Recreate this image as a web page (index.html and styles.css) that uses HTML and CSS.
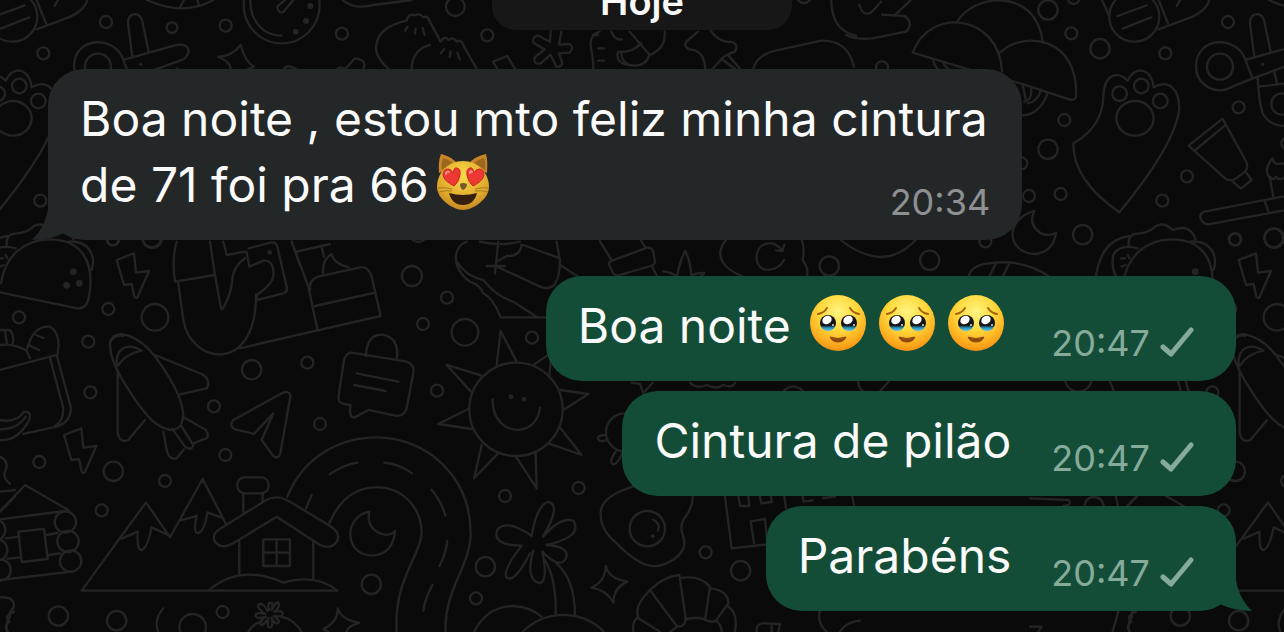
FILE: index.html
```html
<!DOCTYPE html>
<html lang="pt-BR">
<head>
    <meta charset="UTF-8">
    <meta name="viewport" content="width=device-width, initial-scale=1.0">
    <title>Conversa</title>
    <link rel="stylesheet" href="styles.css">
</head>
<body>
    <!-- papel de parede -->
    <svg class="wallpaper" aria-hidden="true">
        <defs>
            <g id="tile">
                <!-- pílula, guarda-sóis, tesoura, pata -->
                <g transform="translate(856 0) scale(.3333)">
                    <circle cx="576" cy="30" r="29"/><circle cx="732" cy="146" r="29"/><circle cx="576" cy="448" r="29"/><circle cx="680" cy="704" r="29"/><circle cx="221" cy="781" r="29"/><circle cx="1255" cy="714" r="29"/>
                    <circle cx="653" cy="-6" r="18"/><circle cx="646" cy="100" r="18"/><circle cx="928" cy="160" r="18"/><circle cx="1116" cy="66" r="18"/><circle cx="625" cy="360" r="18"/><circle cx="1148" cy="322" r="18"/><circle cx="993" cy="529" r="18"/><circle cx="919" cy="602" r="18"/><circle cx="614" cy="582" r="18"/><circle cx="519" cy="588" r="18"/><circle cx="496" cy="490" r="18"/><circle cx="1136" cy="718" r="18"/><circle cx="388" cy="724" r="18"/><circle cx="78" cy="202" r="18"/><circle cx="1294" cy="430" r="18"/>
                    <path d="M78 44L146 48Q175 70 150 95L50 115Q0 120-30 105M10 15Q20 50 45 38L75 5M118 44L165 0"/>
                    <path d="M302 68C350-20 540-40 560 125M170 158C220 20 430 40 438 215M170 158L360 215M432 158C500 90 670 110 660 290Q658 303 640 298L470 243M232 180Q235 200 250 212M262 190Q270 205 285 210M575 280Q550 345 500 346M525 262Q530 300 505 305M555 270Q545 305 515 310M500 255L510 300"/>
                    <circle cx="835" cy="50" r="75"/>
                    <path d="M785 48L872 16M800 86L886 52M738 0L760 48M908 0L936 70M908 88L1010 50Q1060 25 1062-10M962 18L975-5"/>
                    <path d="M1170 185C1150 105 1020 105 1020 200C1020 250 1070 280 1110 268L1190 235Z"/><circle cx="1092" cy="200" r="39"/>
                    <path d="M1195 170L1182 70Q1182 42 1205 42Q1222 44 1226 68L1244 155M1168 180L1328 135Q1363 130 1364 155Q1360 175 1338 182L1190 235"/><circle class="dot" cx="1220" cy="193" r="5"/>
                    <path d="M1205 232Q1208 300 1220 340Q1240 378 1290 378Q1350 370 1345 300L1330 205M1208 260L1335 245M1255 212L1263 252"/><circle cx="1278" cy="312" r="32"/>
                    <path d="M1100 356L998 437L1108 536Q1125 548 1145 532L1168 514Q1180 500 1168 480ZM1018 450L1110 374M1130 545L1155 566L1187 540L1168 514"/>
                    <path d="M790 637Q650 540 652 430Q740 380 742 290C745 215 790 215 815 242C840 190 890 210 893 262C940 235 970 270 970 325Q960 430 790 637Z"/>
                    <circle cx="791" cy="281" r="22"/><circle cx="856" cy="258" r="22"/><circle cx="913" cy="303" r="22"/><ellipse cx="837" cy="355" rx="56" ry="52"/>
                    <path d="M1290 588L1045 635Q1028 642 1035 658Q1045 676 1065 672L1290 630M1225 600L1237 633M1252 590L1242 535Q1220 510 1250 475Q1252 500 1290 488M1242 530Q1252 545 1260 530Q1272 545 1290 528"/>
                    <path d="M535 633C440 660 455 762 540 762Q592 755 600 698Q580 710 555 700Q515 675 535 633Z"/>
                    <path d="M818 735Q815 700 850 700Q880 698 900 678Q925 665 950 690Q1005 670 1018 718M720 830Q735 720 820 708M845 745Q790 730 772 765Q765 800 780 830M795 775h12M815 765l5 10M797 800l12-5"/>
                    <path d="M338 830Q345 795 400 790Q500 775 580 830M400 830L420 790M440 830L460 790"/>
                </g>
                <!-- cronômetro, estrela -->
                <g transform="scale(.3333)">
                    <circle cx="677" cy="77" r="18"/><circle cx="1026" cy="101" r="18"/><circle cx="516" cy="83" r="16"/>
                    <circle cx="845" cy="16" r="114"/><path d="M752-10C745 60 790 107 845 107M860-5L832 20Q835 42 850 36L880 0"/>
                    <circle class="dot" cx="931" cy="18" r="9"/><circle class="dot" cx="918" cy="63" r="9"/><circle class="dot" cx="887" cy="95" r="9"/>
                    <path d="M722 135Q695 170 655 170Q700 190 690 215M722 135Q735 185 762 200L735 212M440 0Q550 50 640 0M552 0L540 22M592 0L598 18M1028 0Q1060 30 1120 15L1235 0"/>
                    <path d="M1170 210Q1120 170 1130 130Q1140 80 1220 62Q1225 38 1245 46Q1260 38 1270 52Q1285 45 1290 65M1215 92L1223 80M1245 100L1247 86M1274 105L1268 84M1235 210Q1235 150 1290 135M850 210Q860 190 890 208M1010 210Q1018 195 1035 208L1065 175Q1105 180 1088 210"/>
                </g>
                <g transform="translate(428 0) scale(.3333)">
                    <circle cx="82" cy="20" r="28"/><circle cx="178" cy="106" r="18"/><circle cx="1128" cy="-15" r="24"/>
                    <path d="M0 55L38 125M38 125Q50 105 62 120Q75 108 85 125Q100 115 108 140L148 210M38 160L48 148M65 170L68 154M95 178L88 158"/>
                    <path d="M368 92L366 125L328 105Q305 120 322 132L350 148L320 172Q315 195 338 190L368 164L385 200Q405 202 402 185L392 160L425 158Q440 142 425 132L393 134L400 95"/>
                    <path d="M210 210L195 185L238 168L262 208M515 95Q480 105 490 150Q498 190 495 210M550 95Q560 122 582 118M510 105H495M510 145h18M510 182h18M605 95L665 165M605 195Q560 190 570 155Q610 160 640 130M580 160Q580 185 605 195M710 95Q715 145 665 165Q650 205 605 195"/>
                    <path d="M810 95L775 125Q765 140 785 148Q830 150 832 210M848 92Q875 130 910 125Q935 135 920 155Q890 165 880 178L850 210M885 180L925 210M900 165L935 205M975 210Q985 160 1060 148L1180 122Q1260 120 1278 200M1210 0Q1210 90 1284 108"/>
                </g>
                <!-- tomada, folha, maçã -->
                <g transform="translate(600 232) scale(.3333)">
                    <circle cx="688" cy="102" r="29"/>
                    <path d="M0 28L35 85M122 24L137 48M38 85L142 47Q157 46 160 60L165 88Q164 98 152 102L55 130Q42 130 38 120L27 98Q26 88 38 85ZM157 105L172 135"/>
                    <path d="M190 118Q215 120 232 135M232 130Q240 85 256 56Q272 90 274 130M274 130Q290 122 312 123L302 135"/>
                    <path d="M378 24C340 70 370 110 425 132M605 24Q615 45 608 85Q628 110 620 135M552 84C535 120 470 130 470 75C470 30 525 20 545 55M552 38L548 57L528 55M720 22Q780 72 843 75Q905 72 950 20M775 450Q775 470 790 478M840 478L865 450"/>
                </g>
                <!-- taco, raio, foguete, cesta -->
                <g transform="translate(0 230) scale(.3333)">
                    <circle cx="57" cy="262" r="18"/><circle cx="325" cy="237" r="18"/><circle cx="465" cy="262" r="40"/><circle cx="265" cy="335" r="18"/><circle cx="271" cy="487" r="18"/><circle cx="642" cy="529" r="18"/><circle cx="755" cy="419" r="29"/><circle cx="340" cy="28" r="18"/><circle cx="455" cy="24" r="28"/>
                    <path d="M0 187L232 235Q262 238 268 195C285 90 240 28 150 28C70 28 15 80 3 160M205 35C260 30 290 70 275 120"/>
                    <circle class="dot" cx="220" cy="125" r="10"/><circle class="dot" cx="200" cy="166" r="10"/><circle class="dot" cx="238" cy="160" r="10"/>
                    <path id="bolt" d="M350 90L402 70L408 128L447 123L412 203Q404 207 402 195L395 162L372 165Z"/>
                    <use href="#bolt" x="-158" y="525"/>
                    <path d="M520 600C470 600 430 550 380 470Q328 390 330 340Q335 310 370 313Q430 325 480 400Q550 500 550 560Q545 595 520 600ZM350 410C345 345 390 340 425 362Q380 370 355 405ZM335 330Q350 312 370 318M465 375L605 432Q635 450 620 475L540 493M353 425V610Q360 640 385 630L435 570M548 560L618 600Q632 625 610 628L580 640M518 598L555 650Q575 665 580 645L542 585M490 605L500 660Q508 692 530 685L552 658"/>
                    <path d="M0 420L170 375L212 530Q215 575 170 590L70 612M150 385L190 535Q190 575 165 588M0 345Q40 340 80 362L90 385M82 355Q100 285 150 290Q185 310 172 375M108 315L130 324M88 346L118 360M0 300H30Q45 320 38 340M15 300L20 340M0 570Q50 580 72 545Q100 545 85 575Q50 635 0 630M0 598Q50 600 78 560"/>
                    <path d="M530 35Q515 90 525 155L645 135L630 35M535 160L550 270C570 400 768 440 768 195M645 135L662 230Q666 245 672 230Q695 190 698 140Q705 105 735 85M670 35L680 75L735 65M740 65L748 110L790 92Q825 90 820 140Q815 165 770 195L772 210L850 190Q865 185 860 170L832 50Q828 35 812 38L745 55M720 355L900 313M875 35L900 105"/><circle class="dot" cx="809" cy="67" r="7"/>
                    <path d="M872 495Q865 480 845 490L700 570Q685 588 705 598L762 612L820 550L785 630L820 678Q838 690 842 665Z"/>
                </g>
                <!-- frasco, balão de fala, sol -->
                <g transform="translate(280 230) scale(.3333)">
                    <circle cx="396" cy="138" r="30"/><circle cx="501" cy="203" r="18"/><circle cx="429" cy="282" r="18"/><circle cx="555" cy="307" r="40"/><circle cx="756" cy="323" r="18"/><circle cx="471" cy="482" r="18"/><circle cx="82" cy="398" r="18"/><circle cx="120" cy="582" r="18"/><circle cx="415" cy="8" r="28"/>
                    <path d="M35 35L85 170L112 298M60 313L302 258L275 140Q265 108 240 112L115 140Q85 150 90 180M105 228L285 188M130 130Q125 90 155 72Q160 100 205 112M50 65L150 42M125 52L132 80"/>
                    <path d="M810 262H662Q640 205 610 190Q600 165 570 155C510 110 520 50 560 35M530 95Q560 140 610 150Q650 200 700 215L770 260M655 35L645 130M620 108h55M730 45L840 85C840 160 820 185 780 170L655 112M725 45Q720 80 680 78L650 95M830 35L838 80M600 35Q660 50 720 35M840 105L895 140"/>
                    <path d="M258 378Q260 312 308 314Q360 325 350 388M215 368L380 395Q405 405 400 430L380 535Q370 562 345 557L265 540L222 563Q205 562 212 525L190 522Q170 515 177 490L192 390Q200 366 215 368ZM230 430L355 455M222 465L317 483"/>
                    <circle cx="708" cy="538" r="140"/><path d="M638 508C635 620 770 630 780 533"/><circle class="dot" cx="693" cy="500" r="7"/><circle class="dot" cx="732" cy="508" r="7"/>
                    <path d="M650 405L662 303L710 395M605 437L500 405L573 485M565 537L475 582L575 597M840 480L925 492L850 540M760 405L815 368L808 437M605 645L582 745L655 670M708 680L770 775L767 668M805 640L905 675L842 595"/>
                </g>
                <!-- cabana, montanhas, casa -->
                <g transform="translate(0 430) scale(.3333)">
                    <circle cx="118" cy="96" r="18"/><circle cx="340" cy="124" r="29"/><circle cx="495" cy="153" r="18"/><circle cx="676" cy="75" r="18"/><circle cx="305" cy="241" r="18"/><circle cx="175" cy="558" r="29"/><circle cx="350" cy="572" r="29"/><circle cx="668" cy="546" r="18"/><circle cx="578" cy="592" r="40"/>
                    <circle cx="196" cy="276" r="32"/><circle cx="204" cy="334" r="32"/><circle cx="212" cy="393" r="32"/><circle cx="-16" cy="300" r="32"/><circle cx="-10" cy="360" r="32"/><circle cx="0" cy="420" r="32"/>
                    <path d="M-5 250L75 165L205 240M0 268L195 243M0 185L45 180M0 450L215 425M18 325L58 320M138 315L172 309M22 386L62 382M145 375L180 370M55 305L132 297L143 387L65 396ZM0 80Q30 95 15 125Q8 145 30 162M0 502Q50 500 40 535Q25 545 30 560Q15 580 22 605"/>
                    <path d="M1012 482H245L438 217L510 322L608 147L678 282M365 326L413 305Q410 360 425 360Q442 355 455 292L510 318M540 272L590 258Q578 310 595 310Q615 300 622 247L662 262"/>
                    <path d="M655 300L795 212Q830 192 865 212L990 288Q1025 310 1010 335Q995 360 960 345L830 260L700 340Q665 360 645 335Q635 315 655 300ZM718 328V437M940 335V448M730 190V245M788 190V215M830 328v80M790 368h80M625 482Q720 400 850 458Q950 430 1012 482"/>
                    <rect x="712" y="142" width="94" height="48" rx="22"/><rect x="790" y="328" width="80" height="80"/>
                    <path d="M490 535Q460 570 475 606M745 606Q760 580 785 575M845 560Q885 570 905 606M808 540Q800 515 812 520Q822 515 815 540Q830 510 836 520Q840 535 822 545Q850 540 848 552Q845 562 822 558Q845 575 832 580Q820 580 815 562Q820 595 808 592Q800 590 806 564Q785 595 780 580Q780 570 798 560Q765 570 767 555Q770 545 796 552Q765 530 778 522Q790 518 803 543"/>
                </g>
                <!-- estrada, lua, palmeira -->
                <g transform="translate(280 430) scale(.3333)">
                    <circle cx="274" cy="463" r="29"/><circle cx="616" cy="410" r="29"/><circle cx="588" cy="505" r="18"/><circle cx="675" cy="198" r="18"/><circle cx="896" cy="174" r="18"/>
                    <path d="M22 200C70 80 180 22 290 22C440 22 572 140 572 310C572 410 490 480 497 606M148 280C180 205 230 172 290 172C370 172 425 235 425 310C425 370 340 450 350 606M150 132Q190 105 232 98M313 98Q360 103 397 130M455 180Q485 215 496 257M502 333Q497 375 478 408M457 465Q435 505 430 542M95 195L78 235"/>
                    <path d="M268 245C190 260 190 377 280 377Q340 370 345 303Q330 320 300 310Q258 290 268 245Z"/>
                    <path d="M755 318Q770 225 805 216Q845 225 790 318M790 320Q840 260 880 272Q910 320 800 345Q870 350 858 385Q840 420 787 365Q805 450 780 460Q735 450 760 362M755 318Q680 265 652 300Q635 345 725 347Q665 425 680 443Q705 460 750 370M795 390Q830 450 827 555M830 400Q885 450 885 555M582 606Q620 530 700 528Q750 530 785 560M728 606Q780 553 860 555Q930 560 972 606"/>
                    <path d="M978 408Q985 445 1042 455Q1000 475 1000 518Q980 480 935 473Q975 455 978 408M173 535Q185 570 238 578Q200 590 200 606M173 535Q175 575 130 597L145 606"/>
                </g>
                <!-- ovo, prédio, croissant -->
                <g transform="translate(600 380) scale(.3333)">
                    <circle cx="317" cy="517" r="18"/><circle cx="422" cy="572" r="29"/><circle cx="142" cy="446" r="53"/><circle cx="75" cy="157" r="57"/><circle cx="580" cy="58" r="38"/>
                    <path d="M18 165Q-10 165-5 178Q0 188 20 180M50 210Q22 250 42 253Q55 250 70 212"/>
                    <path d="M105 318Q0 350 2 400Q0 450 50 490C130 570 165 565 200 550Q265 520 250 470Q235 435 260 405Q280 375 278 350M160 420Q182 430 174 452"/><circle class="dot" cx="158" cy="468" r="6"/>
                    <path d="M375 350L395 505L505 493M415 350L420 378H448L445 350M480 350L484 370L515 366L513 350M462 490L452 424L495 417L502 490M553 350L558 385M608 350L611 365L638 361M670 354L705 350M757 350L762 375"/>
                    <path d="M100 755Q95 725 115 710Q100 680 150 630Q190 590 238 585L258 720Q250 745 230 738L150 630M242 594Q300 585 330 620L315 720M330 625Q385 630 385 670L348 722Q330 730 315 718M385 680Q415 700 405 755M115 715L180 755M255 718Q290 710 315 718M348 722Q365 735 365 755M210 755L235 738"/>
                    <path d="M270 8Q290 28 320 15Q350 30 370 15Q400 25 405 8M95 8L120 12L130 40L158 8M470 755Q468 730 490 730L540 732L535 755M515 732V755M660 690Q650 730 680 755M720 755Q740 725 780 722"/>
                </g>
                <g transform="translate(1030 270) scale(.3333)">
                    <circle cx="145" cy="325" r="40"/><circle cx="192" cy="710" r="29"/>
                    <path d="M240 335L252 365M0 685L115 690Q130 705 100 708M258 680L264 710M320 680L292 710M0 1070L35 1070L25 1085M265 1025L248 1085M318 1025Q285 1040 305 1055Q285 1070 300 1086"/>
                </g>
            </g>
        </defs>
        <use href="#tile" x="-1122"/>
        <use href="#tile"/>
        <use href="#tile" x="1122"/>
    </svg>

    <!-- desenhos usados nas mensagens -->
    <svg class="defs" aria-hidden="true">
        <defs>
            <radialGradient id="skin" cx=".5" cy=".3" r=".75">
                <stop offset="0" stop-color="#fff480"/>
                <stop offset=".45" stop-color="#ffd83a"/>
                <stop offset=".8" stop-color="#fba71b"/>
                <stop offset="1" stop-color="#ee8410"/>
            </radialGradient>
            <radialGradient id="fur" cx=".5" cy=".3" r=".75">
                <stop offset="0" stop-color="#fbd94a"/>
                <stop offset=".65" stop-color="#dfa92b"/>
                <stop offset="1" stop-color="#bd7f22"/>
            </radialGradient>
            <linearGradient id="tear" x1="0" y1="0" x2="0" y2="1">
                <stop offset=".65" stop-color="#151515"/>
                <stop offset=".8" stop-color="#2791bd"/>
                <stop offset="1" stop-color="#65c8e8"/>
            </linearGradient>
            <symbol id="pleading" viewBox="0 0 69 58">
                <circle cx="34" cy="29" r="28" fill="url(#skin)"/>
                <path d="M14 20Q20 19 23 14M46 14Q49 19 55 20" fill="none" stroke="#a7600c" stroke-width="2" stroke-linecap="round"/>
                <ellipse cx="24" cy="29" rx="8" ry="8" fill="url(#tear)"/>
                <ellipse cx="45" cy="29" rx="8" ry="8" fill="url(#tear)"/>
                <ellipse cx="23" cy="26" rx="5" ry="4" transform="rotate(-35 23 26)" fill="#fff"/>
                <ellipse cx="44" cy="26" rx="5" ry="4" transform="rotate(-35 44 26)" fill="#fff"/>
                <circle cx="29" cy="31" r="1" fill="#ddd"/>
                <circle cx="50" cy="31" r="1" fill="#ddd"/>
                <path d="M26 43Q34 46 42 43Q40 48 34 48Q28 48 26 43Z" fill="#8d4a0c" stroke="#8d4a0c" stroke-linejoin="round"/>
            </symbol>
            <symbol id="cat" viewBox="0 0 69 58">
                <path d="M12 1Q9 8 10 20L30 12Q22 3 12 1ZM57 1Q59 8 58 20L38 12Q46 3 57 1Z" fill="#c98526"/>
                <path d="M14 5Q12 10 13 17L24 10Q19 6 14 5ZM55 5Q57 10 56 17L45 10Q50 6 55 5Z" fill="#9c6820"/>
                <path d="M34 8C49 8 60 20 60 34C60 46 44 57 34 57C24 57 8 46 8 34C8 20 19 8 34 8Z" fill="url(#fur)"/>
                <path d="M9 35Q16 34 23 36M10 39Q17 37 23 38M60 35Q53 34 46 36M59 39Q52 37 46 38" fill="none" stroke="#a87a20" stroke-width="1"/>
                <path d="M25 33Q15 28 14 22Q14 16 19 16Q22 16 24 20Q25 14 28 15Q32 16 31 22Q30 29 25 33Z" fill="#ed3833" stroke="#c92525"/>
                <path d="M44 33Q54 28 55 22Q55 16 50 16Q47 16 45 20Q44 14 41 15Q37 16 38 22Q39 29 44 33Z" fill="#ed3833" stroke="#c92525"/>
                <path d="M17 21Q17 18 20 19M41 20Q41 17 43 19" fill="none" stroke="#ff9289" stroke-width="2" stroke-linecap="round"/>
                <path d="M31 31Q34 29 38 31Q38 35 34 37Q31 35 31 31Z" fill="#77582c"/>
                <path d="M20 40Q34 44 48 40Q45 52 34 52Q23 52 20 40Z" fill="#35200f"/>
            </symbol>
            <symbol id="check" viewBox="0 0 34 30">
                <path d="M3 20L11 27L31 3" fill="none" stroke="currentColor" stroke-width="5" stroke-linecap="round" stroke-linejoin="round"/>
            </symbol>
        </defs>
    </svg>

    <main class="chat">
        <h1 class="day">Hoje</h1>

        <article class="bubble received">
            <p class="text">Boa noite , estou mto feliz minha cintura de 71 foi pra 66<svg class="emoji" role="img" aria-label="gato apaixonado"><use href="#cat"/></svg></p>
            <time class="time" datetime="20:34">20:34</time>
            <svg class="tail" viewBox="0 0 50 50" aria-hidden="true"><path d="M17 5C17 30 8 42 0 50C13 50 24 47 32 43L43 30Z"/></svg>
        </article>

        <section class="group">
            <article class="bubble sent">
                <p class="text">Boa noite <svg class="emoji" role="img" aria-label="olhos suplicantes"><use href="#pleading"/></svg><svg class="emoji" role="img" aria-label="olhos suplicantes"><use href="#pleading"/></svg><svg class="emoji" role="img" aria-label="olhos suplicantes"><use href="#pleading"/></svg></p>
                <time class="time" datetime="20:47">20:47</time>
                <svg class="check" role="img" aria-label="Enviada"><use href="#check"/></svg>
            </article>
            <article class="bubble sent">
                <p class="text">Cintura de pilão</p>
                <time class="time" datetime="20:47">20:47</time>
                <svg class="check" role="img" aria-label="Enviada"><use href="#check"/></svg>
            </article>
            <article class="bubble sent">
                <p class="text">Parabéns</p>
                <time class="time" datetime="20:47">20:47</time>
                <svg class="check" role="img" aria-label="Enviada"><use href="#check"/></svg>
                <svg class="tail" viewBox="0 0 50 50" aria-hidden="true"><path d="M33 5C33 30 42 42 50 50C37 50 26 47 18 43L7 30Z"/></svg>
            </article>
        </section>
    </main>
</body>
</html>
```
FILE: styles.css
```css
* {
    box-sizing: border-box;
}
body {
    margin: 0;
    min-height: 100vh;
    position: relative;
    overflow: hidden;
    background-color: #0a0a0a;
    color: #fafafa;
    font-family: Inter, 'Noto Sans', sans-serif;
}
.defs {
    position: absolute;
    width: 0;
    height: 0;
}

/* papel de parede */
.wallpaper {
    position: absolute;
    top: 0;
    left: 0;
    width: 100%;
    height: 100%;
    fill: none;
    stroke: #242424;
    stroke-width: 7;
    stroke-linecap: round;
    stroke-linejoin: round;
}
.wallpaper .dot {
    fill: #242424;
    stroke: none;
}

.chat {
    position: relative;
    display: flex;
    flex-direction: column;
    padding: 0 48px 20px;
}
.day {
    align-self: center;
    width: 300px;
    margin: -34px 0 39px;
    padding: 13px 0 7px;
    border-radius: 24px;
    background-color: #171717;
    font-size: 38px;
    font-weight: 600;
    line-height: 44px;
    text-align: center;
}

/* mensagens */
.bubble {
    position: relative;
    padding: 17px 32px 16px;
    border-radius: 36px;
}
.text {
    margin: 0 0 6px;
    font-size: 48px;
    line-height: 66px;
}
.time {
    font-size: 36px;
    line-height: 44px;
}
.emoji {
    width: 69px;
    height: 58px;
    margin-top: -10px;
    vertical-align: -9px;
}
.received {
    display: grid;
    align-self: flex-start;
    max-width: 82%;
    background-color: #232728;
}
.received .text,
.received .time {
    grid-area: 1 / 1;
}
.received .time {
    align-self: end;
    justify-self: end;
    color: #8e9091;
}
.group {
    display: flex;
    flex-direction: column;
    align-items: flex-end;
    gap: 10px;
    margin-top: 36px;
}
.sent {
    display: flex;
    align-items: flex-end;
    background-color: #144d37;
}
.sent .time {
    margin-left: 40px;
    color: #86ab9b;
}
.check {
    width: 34px;
    height: 30px;
    margin: 0 10px 8px;
    color: #86ab9b;
}
.tail {
    position: absolute;
    bottom: 0;
    width: 50px;
    height: 50px;
}
.received .tail {
    left: -16px;
    fill: #232728;
}
.sent .tail {
    right: -16px;
    fill: #144d37;
}
```
